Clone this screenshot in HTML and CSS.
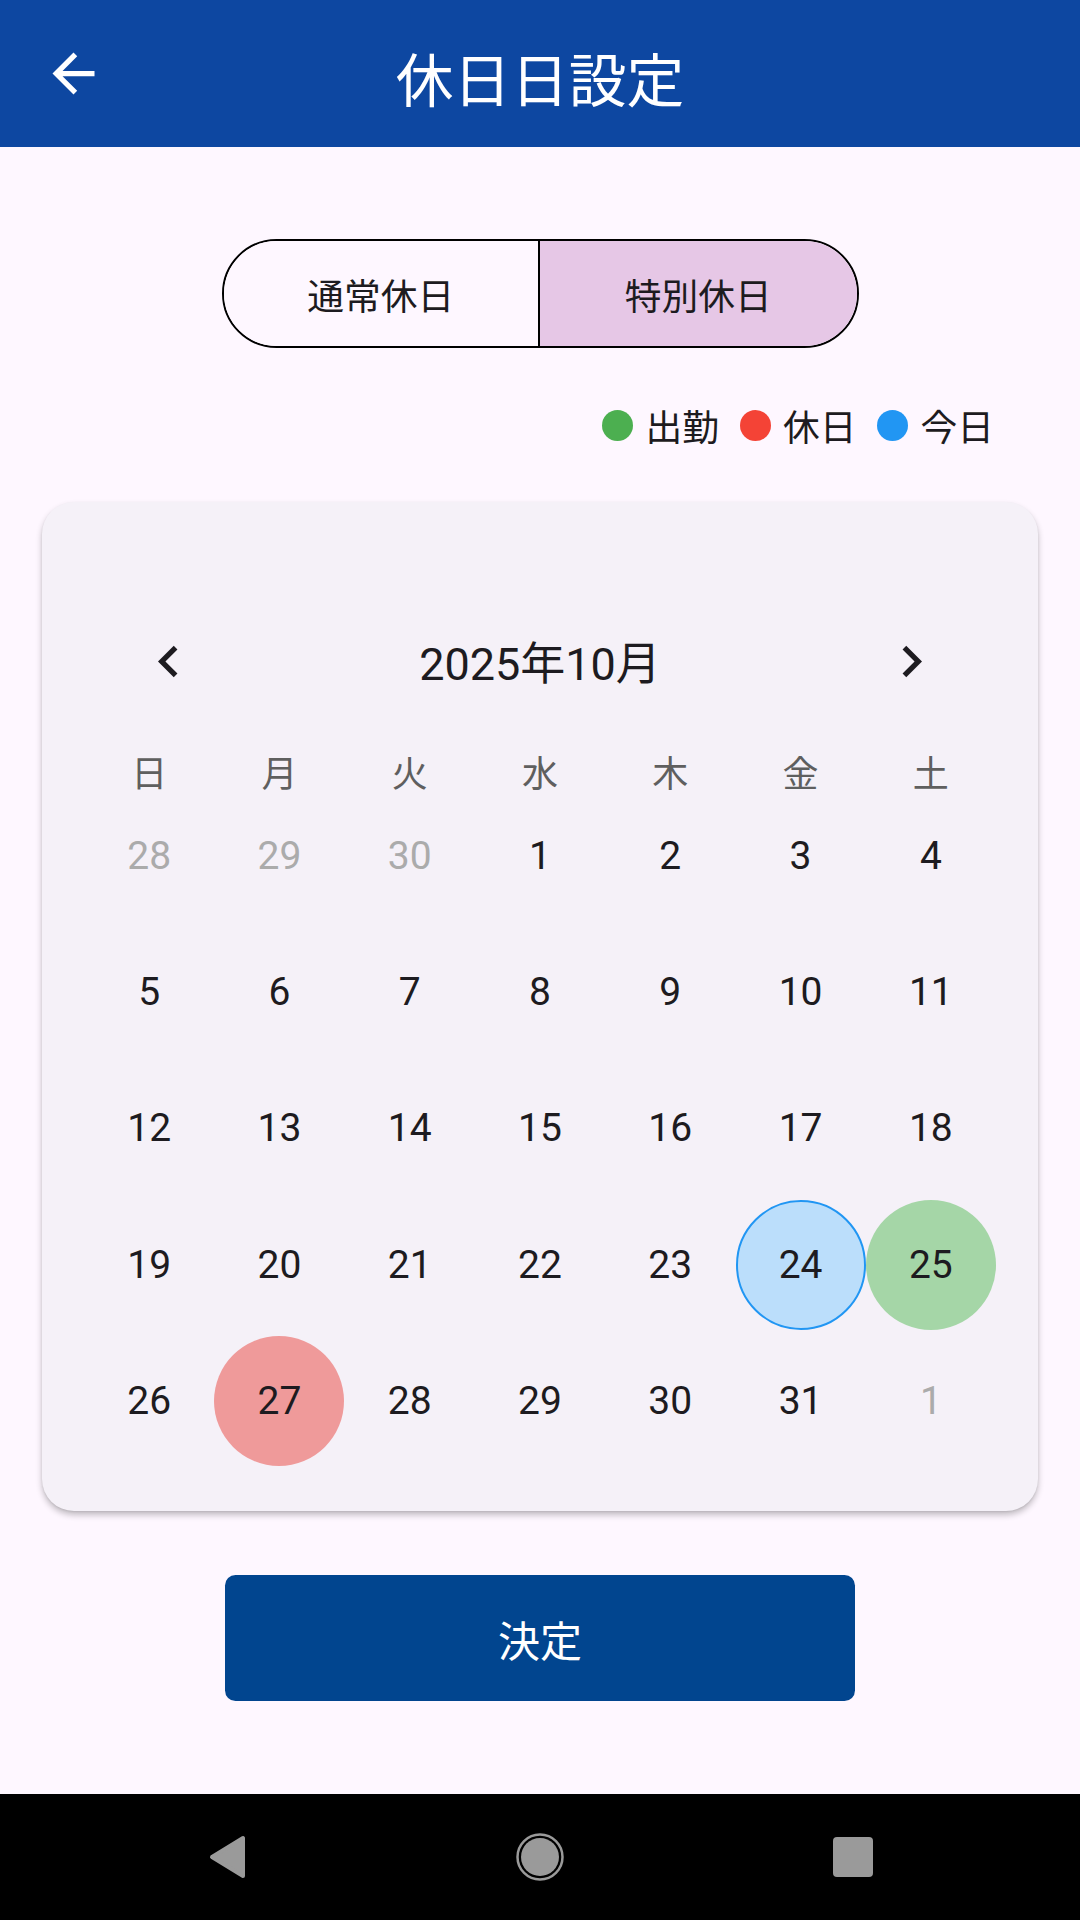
FILE: index.html
```html
<!DOCTYPE html>
<html lang="ja">
<head>
    <meta charset="UTF-8">
    <meta name="viewport" content="width=device-width, initial-scale=1.0">
    <title>休日日設定</title>
    <link rel="stylesheet" href="styles.css">
</head>
<body>
<div class="screen">

    <!-- App bar -->
    <header class="app-bar">
        <button class="back-btn" aria-label="戻る">
            <svg viewBox="0 0 24 24"><path d="M20 11H7.83l5.59-5.59L12 4l-8 8 8 8 1.41-1.41L7.83 13H20v-2z"/></svg>
        </button>
        <h1 class="app-title">休日日設定</h1>
        <span></span>
    </header>

    <main class="content">
        <!-- 休日の種類 -->
        <div class="segmented">
            <button class="segment">通常休日</button>
            <button class="segment active">特別休日</button>
        </div>

        <!-- 凡例 -->
        <div class="legend">
            <span class="legend-item"><span class="dot dot-work"></span>出勤</span>
            <span class="legend-item"><span class="dot dot-holiday"></span>休日</span>
            <span class="legend-item"><span class="dot dot-today"></span>今日</span>
        </div>

        <!-- カレンダー -->
        <section class="calendar-card">
            <div class="cal-header">
                <button class="nav-btn" aria-label="前月">
                    <svg viewBox="0 0 24 24"><path d="M15.41 7.41L14 6l-6 6 6 6 1.41-1.41L10.83 12z"/></svg>
                </button>
                <div class="cal-title">2025年10月</div>
                <button class="nav-btn" aria-label="翌月">
                    <svg viewBox="0 0 24 24"><path d="M10 6L8.59 7.41 13.17 12l-4.58 4.59L10 18l6-6z"/></svg>
                </button>
            </div>

            <div class="weekdays">
                <span>日</span><span>月</span><span>火</span><span>水</span><span>木</span><span>金</span><span>土</span>
            </div>

            <div class="days" id="days"></div>
        </section>

        <button class="submit-btn">決定</button>
    </main>

    <!-- システムナビゲーション -->
    <nav class="system-nav">
        <span class="sys-slot">
            <svg width="40" height="46" viewBox="0 0 40 46"><path d="M36 4 L36 42 L5 23 Z" fill="#9a9a9a" stroke="#9a9a9a" stroke-width="4" stroke-linejoin="round"/></svg>
        </span>
        <span class="sys-slot">
            <svg width="50" height="50" viewBox="0 0 50 50">
                <circle cx="25" cy="25" r="22.5" fill="none" stroke="#9a9a9a" stroke-width="2.5"/>
                <circle cx="25" cy="25" r="19" fill="#9a9a9a"/>
            </svg>
        </span>
        <span class="sys-slot">
            <span class="recents"></span>
        </span>
    </nav>
</div>

<script>
    // 2025年10月のカレンダーを描画
    const days = [
        [28, 'other'], [29, 'other'], [30, 'other'], [1], [2], [3], [4],
        [5], [6], [7], [8], [9], [10], [11],
        [12], [13], [14], [15], [16], [17], [18],
        [19], [20], [21], [22], [23], [24, 'today'], [25, 'work'],
        [26], [27, 'holiday'], [28], [29], [30], [31], [1, 'other']
    ];

    const grid = document.getElementById('days');
    days.forEach(([num, type]) => {
        const cell = document.createElement('div');
        cell.className = 'day' + (type ? ' ' + type : '');
        cell.textContent = num;
        grid.appendChild(cell);
    });
</script>
</body>
</html>
```

FILE: styles.css
```css
* {
    margin: 0;
    padding: 0;
    box-sizing: border-box;
}

body {
    width: 1080px;
    height: 1920px;
    font-family: Roboto, "Noto Sans CJK JP", sans-serif;
    background-color: #fef7ff;
    color: #1d1b20;
    overflow: hidden;
}

button {
    font-family: inherit;
    border: none;
    background: none;
    cursor: pointer;
}

.screen {
    height: 1920px;
    display: flex;
    flex-direction: column;
}

/* App bar */
.app-bar {
    height: 147px;
    background-color: #0d47a1;
    display: grid;
    grid-template-columns: 1fr auto 1fr;
    align-items: center;
    padding: 0 42px;
}

.back-btn {
    width: 63px;
    height: 63px;
    display: flex;
}

.back-btn svg {
    width: 63px;
    height: 63px;
    fill: #ffffff;
}

.app-title {
    font-family: "Noto Sans CJK JP", sans-serif;
    font-size: 57.75px;
    font-weight: 400;
    color: #ffffff;
    line-height: 1;
    padding-top: 8px;
}

/* Content */
.content {
    flex: 1;
    display: flex;
    flex-direction: column;
    align-items: center;
}

.segmented {
    margin-top: 92px;
    width: 637px;
    height: 109px;
    border: 2.5px solid #000000;
    border-radius: 55px;
    overflow: hidden;
    display: grid;
    grid-template-columns: 1fr 1fr;
}

.segment {
    font-size: 36.75px;
    color: #1d1b20;
    background-color: #fef7ff;
}

.segment:first-child {
    border-right: 2px solid #000000;
}

.segment.active {
    background-color: #e6c7e6;
}

.legend {
    align-self: stretch;
    margin-top: 57px;
    height: 40px;
    padding-right: 86px;
    display: flex;
    justify-content: flex-end;
    align-items: center;
    gap: 21px;
}

.legend-item {
    display: flex;
    align-items: center;
    gap: 12px;
    font-size: 36.75px;
}

.dot {
    width: 31px;
    height: 31px;
    border-radius: 50%;
}

.dot-work {
    background-color: #4caf50;
}

.dot-holiday {
    background-color: #f44336;
}

.dot-today {
    background-color: #2196f3;
}

/* Calendar */
.calendar-card {
    align-self: stretch;
    margin: 56.5px 42px 0;
    padding: 128.5px 42px 45px;
    background-color: #f5f1f8;
    border-radius: 32px;
    box-shadow: 0 4px 6px rgba(0, 0, 0, 0.24), 0 1px 2px rgba(0, 0, 0, 0.08);
}

.cal-header {
    height: 63px;
    padding: 0 53px;
    display: flex;
    justify-content: space-between;
    align-items: center;
}

.nav-btn {
    width: 63px;
    height: 63px;
    display: flex;
}

.nav-btn svg {
    width: 63px;
    height: 63px;
    fill: #1d1b20;
}

.cal-title {
    font-size: 45px;
    color: #1d1b20;
    padding-bottom: 2px;
}

.weekdays {
    margin-top: 62.5px;
    height: 35px;
    display: grid;
    grid-template-columns: repeat(7, 1fr);
    text-align: center;
    font-family: "Noto Sans CJK JP", sans-serif;
    font-size: 36px;
    line-height: 31px;
    color: #5f5f5f;
}

.days {
    display: grid;
    grid-template-columns: repeat(7, 1fr);
    grid-auto-rows: 130px;
    row-gap: 6.4px;
    justify-items: center;
    align-items: center;
}

.day {
    width: 130px;
    height: 130px;
    border-radius: 50%;
    display: flex;
    justify-content: center;
    align-items: center;
    font-size: 39px;
    color: #1d1b20;
}

.day.other {
    color: #ababab;
}

.day.today {
    background-color: #bbdefb;
    border: 2.5px solid #2196f3;
}

.day.work {
    background-color: #a5d6a7;
}

.day.holiday {
    background-color: #ef9a9a;
}

.submit-btn {
    margin-top: 64px;
    width: 630px;
    height: 126px;
    background-color: #01458f;
    border-radius: 10.5px;
    color: #ffffff;
    font-size: 42px;
}

/* System navigation bar */
.system-nav {
    height: 126px;
    background-color: #000000;
    display: flex;
    justify-content: center;
    align-items: center;
}

.sys-slot {
    width: 313px;
    display: flex;
    justify-content: center;
    align-items: center;
}

.recents {
    width: 40px;
    height: 40px;
    border-radius: 4px;
    background-color: #9a9a9a;
}
```
